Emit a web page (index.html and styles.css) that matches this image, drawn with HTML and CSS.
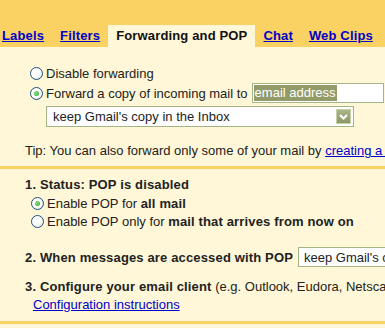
FILE: index.html
```html
<!DOCTYPE html>
<html>
<head>
<meta charset="utf-8">
<link rel="stylesheet" href="styles.css">
</head>
<body>
<div class="page">
  <div class="tabs">
    <a class="tab" href="#">Labels</a>
    <a class="tab" href="#">Filters</a>
    <span class="tab active">Forwarding and POP</span>
    <a class="tab" href="#">Chat</a>
    <a class="tab" href="#">Web Clips</a>
  </div>
  <div class="content">
    <div class="section fwd">
      <div class="row r-disable">
        <span class="radio"></span><span>Disable forwarding</span>
      </div>
      <div class="row r-forward">
        <span class="radio on"></span><span>Forward a copy of incoming mail to</span>
        <span class="textbox"><span class="sel">email address</span></span>
      </div>
      <div class="select s1">
        <span class="sel-text">keep Gmail's copy in the Inbox</span>
        <span class="arrow"><svg width="15" height="15" viewBox="0 0 15 15"><path d="M4 6 L7.5 9.5 L11 6" fill="none" stroke="#fff" stroke-width="2"/></svg></span>
      </div>
      <div class="tip">Tip: You can also forward only some of your mail by <a href="#">creating a filter!</a></div>
    </div>
    <div class="section pop">
      <div class="head"><b>1. Status: POP is disabled</b></div>
      <div class="row r-pop">
        <span class="radio on"></span><span>Enable POP for <b>all mail</b></span>
      </div>
      <div class="row r-pop">
        <span class="radio"></span><span>Enable POP only for <b>mail that arrives from now on</b></span>
      </div>
      <div class="row r-when">
        <b>2. When messages are accessed with POP</b>
        <div class="select s2"><span class="sel-text">keep Gmail's copy in the Inbox</span></div>
      </div>
      <div class="head r-conf"><b>3. Configure your email client</b> (e.g. Outlook, Eudora, Netscape Mail)</div>
      <div class="instr"><a href="#">Configuration instructions</a></div>
    </div>
  </div>
</div>
</body>
</html>
```

FILE: styles.css
```css
html, body {
  margin: 0;
  padding: 0;
  overflow: hidden;
  background: #fff7d7;
}
.page {
  width: 385px;
  height: 328px;
  overflow: hidden;
  font-family: "Liberation Sans", Arial, sans-serif;
  font-size: 13px;
  color: #222;
  white-space: nowrap;
}
a { color: #0000cc; text-decoration: underline; }
b { letter-spacing: 0.15px; }
.tabs {
  background: #fad163;
  height: 47px;
  padding-top: 25px;
  box-sizing: border-box;
  display: flex;
  margin-left: -6px;
}
.tab {
  display: block;
  height: 22px;
  line-height: 22px;
  padding: 0 8px;
  font-weight: bold;
  letter-spacing: 0.15px;
}
.tab.active {
  background: #fff7d7;
  color: #111;
}
.section {
  border-bottom: 3px solid #fad163;
  display: flex;
  flex-direction: column;
  align-items: flex-start;
}
.fwd {
  padding: 17px 0 6px 30px;
}
.row {
  display: flex;
  align-items: center;
  height: 18px;
}
.radio {
  width: 11px;
  height: 11px;
  border: 1px solid #1c5180;
  border-radius: 50%;
  background: radial-gradient(circle at 35% 35%, #ffffff 0%, #ffffff 40%, #dcdcd4 100%);
  margin-right: 3px;
  position: relative;
  flex: none;
}
.radio.on::after {
  content: "";
  position: absolute;
  left: 3px;
  top: 3px;
  width: 5px;
  height: 5px;
  border-radius: 50%;
  background: radial-gradient(circle at 40% 40%, #8fe08a, #21a121);
}
.r-forward {
  height: 20px;
  margin-top: 1px;
}
.textbox {
  margin-left: 4px;
  width: 129px;
  height: 18px;
  border: 1px solid #a3b585;
  background: #fff;
  display: flex;
  align-items: center;
  padding-left: 1px;
}
.sel {
  background: #939b6b;
  color: #fff;
  line-height: 16px;
  padding: 0 1px;
}
.select {
  border: 1px solid #a3b585;
  background: #fff;
  display: flex;
  align-items: center;
  box-sizing: border-box;
}
.s1 {
  margin-top: 3px;
  margin-left: 16px;
  width: 308px;
  height: 21px;
  padding: 0 2px 0 6px;
  justify-content: space-between;
}
.sel-text { color: #222; }
.arrow {
  width: 15px;
  height: 15px;
  background: linear-gradient(#a9b585, #8c9866);
  border: 1px solid #c5cfa9;
  box-sizing: border-box;
  display: flex;
}
.arrow svg { margin: -1px; }
.tip {
  margin-top: 15px;
  margin-left: -5px;
  line-height: 18px;
}
.pop {
  padding: 7px 0 7px 25px;
}
.head {
  line-height: 18px;
}
.r-pop {
  padding-left: 6px;
}
.r-pop:first-of-type { margin-top: 1px; }
.r-when {
  margin-top: 17px;
  height: 20px;
}
.s2 {
  margin-left: 5px;
  width: 200px;
  height: 20px;
  padding-left: 5px;
}
.r-conf {
  margin-top: 11px;
}
.instr {
  padding-left: 8px;
  line-height: 18px;
}
```
